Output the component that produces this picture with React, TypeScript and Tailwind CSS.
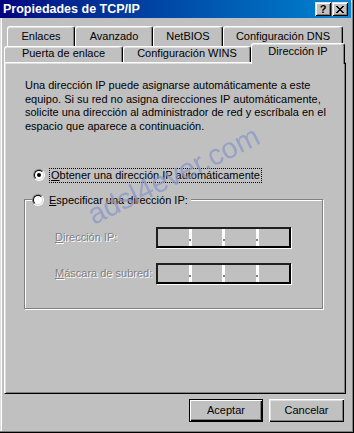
import React from "react";

const raised =
  "shadow-[inset_1px_1px_#dfdfdf,inset_-1px_-1px_#000,inset_2px_2px_#fff,inset_-2px_-2px_#808080]";

function TitleButton({ children }: { children: React.ReactNode }) {
  return (
    <div
      className={`w-[16px] h-[14px] bg-[#c0c0c0] flex items-center justify-center ${raised}`}
    >
      {children}
    </div>
  );
}

function Tab({ label, w, row }: { label: string; w: number; row: 1 | 2 }) {
  return (
    <div
      style={{ width: w }}
      className={
        row === 1
          ? "h-[21px] shrink-0 flex justify-center pt-[3px] rounded-t-[3px] border-t border-l border-white border-r border-r-black shadow-[inset_-1px_0_#808080,inset_0_1px_#dfdfdf]"
          : "h-[16px] shrink-0 flex justify-center pt-0 rounded-t-[3px] border-t border-l border-white border-r border-r-black shadow-[inset_-1px_0_#808080,inset_0_1px_#dfdfdf]"
      }
    >
      {label}
    </div>
  );
}

function Radio({ checked }: { checked?: boolean }) {
  return (
    <div className="w-[12px] h-[12px] shrink-0 rounded-full border border-t-[#808080] border-l-[#808080] border-r-white border-b-white">
      <div className="w-full h-full rounded-full border border-t-black border-l-black border-r-[#dfdfdf] border-b-[#dfdfdf] bg-white flex items-center justify-center">
        {checked && <div className="w-[4px] h-[4px] rounded-full bg-black" />}
      </div>
    </div>
  );
}

function IpBox() {
  const seg = "flex-1";
  return (
    <div className="w-[135px] h-[21px] border-2 border-t-[#202020] border-l-[#202020] border-r-black border-b-black flex shadow-[1px_1px_#fff]">
      <div className={seg} />
      <Sep />
      <div className={seg} />
      <Sep />
      <div className={seg} />
      <Sep />
      <div className={seg} />
    </div>
  );
}

function Sep() {
  return (
    <div className="w-[3px] bg-white flex flex-col items-center pt-[10px]">
      <div className="w-[2px] h-[2px] bg-[#808080]" />
    </div>
  );
}

export default function App() {
  return (
    <div
      className="relative w-[354px] h-[433px] overflow-hidden bg-[#c0c0c0] text-[11px] text-black shadow-[inset_-1px_-1px_#000,inset_-2px_-2px_#808080,inset_1px_1px_#dfdfdf,inset_2px_2px_#fff]"
      style={{ fontFamily: '"Liberation Sans", Arial, sans-serif' }}
    >
      {/* Title bar */}
      <div className="h-[18px] mr-[3px] flex items-center bg-gradient-to-r from-[#000080] to-[#1084d0] pl-[3px] pr-[3px]">
        <div className="flex-1 text-white font-bold text-[12.5px] leading-none">
          Propiedades de TCP/IP
        </div>
        <div className="flex gap-[1px]">
          <TitleButton>
            <span className="font-bold text-[11px] leading-none text-black">?</span>
          </TitleButton>
          <TitleButton>
            <svg width="8" height="7" viewBox="0 0 8 7">
              <path
                d="M0 0h2v1h1v1h2v-1h1v-1h2v1h-1v1h-1v1h-1v1h1v1h1v1h1v1h-2v-1h-1v-1h-2v1h-1v1h-2v-1h1v-1h1v-1h1v-1h-1v-1h-1v-1h-1z"
                fill="#000"
              />
            </svg>
          </TitleButton>
        </div>
      </div>

      {/* Tabs row 1 */}
      <div className="flex ml-[7px] mt-[8px] leading-[13px]">
        <Tab row={1} label="Enlaces" w={68} />
        <Tab row={1} label="Avanzado" w={78} />
        <Tab row={1} label="NetBIOS" w={70} />
        <Tab row={1} label="Configuración DNS" w={120} />
      </div>

      {/* Tabs row 2 */}
      <div className="flex items-end ml-[4px] -mt-[1px] leading-[13px] h-[16px] relative z-10">
        <Tab row={2} label="Puerta de enlace" w={119} />
        <Tab row={2} label="Configuración WINS" w={128} />
        <div className="w-[94px] h-[21px] -mb-[2px] shrink-0 flex justify-center pt-[1px] bg-[#c0c0c0] rounded-t-[3px] border-t border-l border-white border-r border-r-black shadow-[inset_-1px_0_#808080,inset_0_1px_#dfdfdf]">
          Dirección IP
        </div>
      </div>

      {/* Panel */}
      <div className="ml-[4px] w-[342px] h-[332px] border border-t-white border-l-white border-r-black border-b-black shadow-[inset_1px_1px_#dfdfdf,inset_-1px_-1px_#808080]">
        <p className="ml-[20px] mt-[16px] leading-[13.7px]">
          Una dirección IP puede asignarse automáticamente a este
          <br />
          equipo. Si su red no asigna direcciones IP automáticamente,
          <br />
          solicite una dirección al administrador de red y escríbala en el
          <br />
          espacio que aparece a continuación.
        </p>

        <div className="flex items-center ml-[28px] mt-[34px] h-[15px]">
          <Radio checked />
          <span className="ml-[4px] px-[1px] border border-dotted border-black leading-[13px]">
            <span className="underline">O</span>btener una dirección IP automáticamente
          </span>
        </div>

        <fieldset className="ml-[19px] mt-[10px] w-[299px] border border-[#808080] shadow-[1px_1px_#fff,inset_1px_1px_#fff] pb-[24px]">
          <legend className="ml-[7px] pr-[3px] bg-[#c0c0c0] flex items-center h-[14px]">
            <Radio />
            <span className="ml-[5px]">
              <span className="underline">E</span>specificar una dirección IP:
            </span>
          </legend>

          <div className="flex items-center ml-[30px] mt-[20px]">
            <div className="w-[101px] text-[#808080] [text-shadow:1px_1px_0_#fff]">
              <span className="underline">D</span>irección IP:
            </div>
            <IpBox />
          </div>
          <div className="flex items-center ml-[30px] mt-[15px]">
            <div className="w-[101px] text-[#808080] [text-shadow:1px_1px_0_#fff]">
              <span className="underline">M</span>áscara de subred:
            </div>
            <IpBox />
          </div>
        </fieldset>
      </div>

      {/* Buttons */}
      <div className="flex justify-end gap-[6px] mt-[5px] mr-[10px]">
        <button className="w-[74px] h-[23px] border border-black bg-[#c0c0c0] shadow-[inset_1px_1px_#fff,inset_-1px_-1px_#000,inset_-2px_-2px_#808080]">
          Aceptar
        </button>
        <button className="w-[75px] h-[23px] bg-[#c0c0c0] shadow-[inset_1px_1px_#fff,inset_-1px_-1px_#000,inset_-2px_-2px_#808080,inset_2px_2px_#dfdfdf]">
          Cancelar
        </button>
      </div>

      {/* Watermark */}
      <span className="pointer-events-none absolute left-[80px] top-[160px] rotate-[-26deg] text-[29px] leading-[30px] text-[#8797c8] opacity-75 whitespace-nowrap">
        adsl4ever.com
      </span>
    </div>
  );
}
